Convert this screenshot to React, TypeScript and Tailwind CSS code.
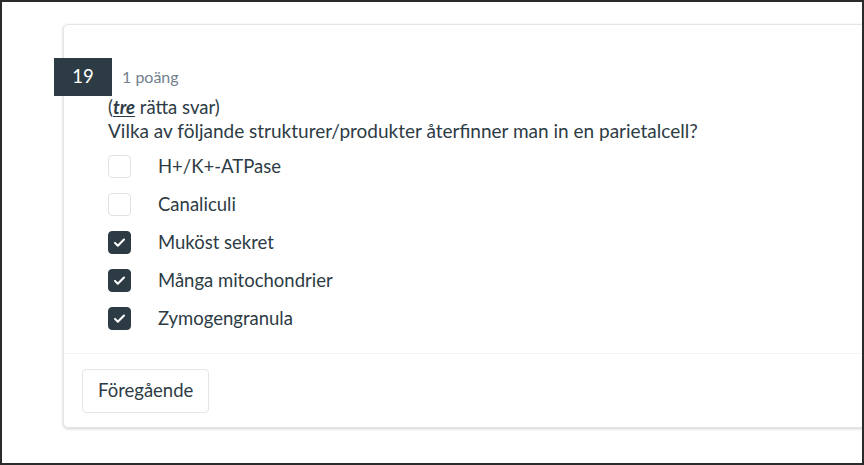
import React from 'react';

const options = [
  { label: 'H+/K+-ATPase', checked: false },
  { label: 'Canaliculi', checked: false },
  { label: 'Muköst sekret', checked: true },
  { label: 'Många mitochondrier', checked: true },
  { label: 'Zymogengranula', checked: true },
];

const Check: React.FC<{ checked: boolean }> = ({ checked }) => (
  <span
    className={`flex h-[23px] w-[23px] shrink-0 items-center justify-center rounded-[4px] border ${
      checked ? 'border-[#2d3b45] bg-[#2d3b45]' : 'border-[#dfe2e5] bg-white'
    }`}
  >
    {checked && (
      <svg width="15" height="15" viewBox="0 0 16 16" fill="none">
        <path d="M3.2 8.4l3 3L12.8 4.8" stroke="#fff" strokeWidth="2.2" strokeLinecap="round" strokeLinejoin="round" />
      </svg>
    )}
  </span>
);

export default function App() {
  return (
    <div
      className="relative h-[465px] w-[864px] overflow-hidden border-2 border-[#2b2b2b] bg-white text-[#2d3b45]"
      style={{ fontFamily: 'Lato, "Noto Sans", sans-serif' }}
    >
      <div className="ml-[61px] mt-[22px] w-[840px] rounded-[5px] border border-[#e3e5e7] bg-white shadow-[0_1px_3px_rgba(0,0,0,0.18)]">
        <div className="pb-[16px] pt-[33px]">
          <div className="-ml-[10px] flex items-center gap-[10px]">
            <div className="flex h-[38px] w-[58px] items-center justify-center bg-[#2d3b45] text-[18.5px] text-white">19</div>
            <span className="text-[16px] text-[#73818c]">1 poäng</span>
          </div>
          <div className="pl-[44px] text-[18.5px] leading-[24px]">
            <p className="-mt-[1px]">
              (<strong className="italic underline decoration-1 underline-offset-2">tre</strong> rätta svar)
            </p>
            <p className="text-[19px]">Vilka av följande strukturer/produkter återfinner man in en parietalcell?</p>
            <div className="mt-[4px] flex flex-col">
              {options.map((o, i) => (
                <label key={i} className="flex h-[38px] items-center gap-[27px]">
                  <Check checked={o.checked} />
                  <span>{o.label}</span>
                </label>
              ))}
            </div>
          </div>
        </div>
        <div className="border-t border-[#f3f4f5] pb-[14px] pl-[18px] pt-[15px]">
          <button className="h-[44px] rounded-[4px] border border-[#e3e5e7] bg-white px-[15px] text-[18.5px] text-[#2d3b45]">
            Föregående
          </button>
        </div>
      </div>
    </div>
  );
}
